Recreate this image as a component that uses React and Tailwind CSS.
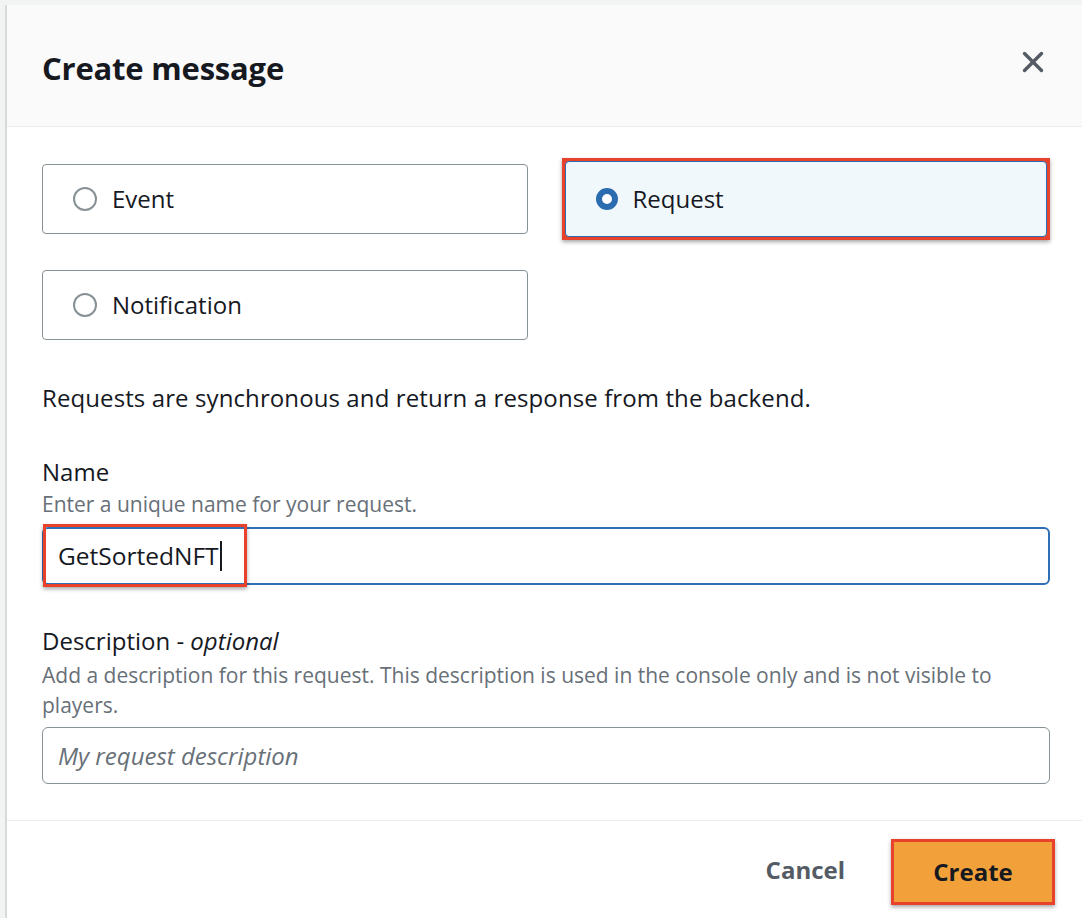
import { X } from 'lucide-react';

function Radio({ checked }) {
  return checked ? (
    <span className="w-[22px] h-[22px] rounded-full border-[6px] border-[#2b6cb0] bg-white shrink-0" />
  ) : (
    <span className="w-[24px] h-[24px] rounded-full border-2 border-[#879196] bg-white shrink-0" />
  );
}

function Tile({ label, checked }) {
  return (
    <div
      className={`flex items-center gap-[15px] h-full px-[30px] rounded-[4px] border ${
        checked ? 'bg-[#f1f8fc] border-[#2b6cb0]' : 'bg-white border-[#879196]'
      }`}
    >
      <Radio checked={checked} />
      <span className="text-[24px] text-[#16191f]">{label}</span>
    </div>
  );
}

export default function App() {
  return (
    <div className="w-[1082px] h-[918px] bg-[#f2f3f3] pt-[5px] pl-[5px] overflow-hidden font-['Open_Sans',sans-serif]">
      <div className="h-full bg-white border-l-2 border-[#d5dbdb] flex flex-col">
        <div className="h-[122px] bg-[#fafafa] border-b border-[#eaeded] flex items-center justify-between pl-[35px] pr-[32px] pt-[5px]">
          <h1 className="text-[31px] font-bold text-[#16191f] tracking-[-0.2px]">Create message</h1>
          <X className="w-[34px] h-[34px] text-[#545b64] -mt-[12px]" strokeWidth={2.4} />
        </div>

        <div className="flex-1 pl-[35px] pr-[32px] pt-[37px]">
          <div className="grid grid-cols-2 gap-x-[37px] gap-y-[36px] auto-rows-[70px]">
            <Tile label="Event" />
            <div className="p-[3px] -mt-[6px] -ml-[3px] h-[82px] bg-[#e8412c] shadow-[0_2px_4px_rgba(0,0,0,0.35)]">
              <Tile label="Request" checked />
            </div>
            <Tile label="Notification" />
          </div>

          <p className="mt-[40px] text-[24px] text-[#16191f] tracking-[0.1px]">
            Requests are synchronous and return a response from the backend.
          </p>

          <div className="mt-[40px]">
            <div className="text-[24px] text-[#16191f] leading-[32px]">Name</div>
            <div className="text-[21px] text-[#687078] leading-[32px]">Enter a unique name for your request.</div>
            <div className="relative mt-[7px] h-[58px] rounded-[6px] border-2 border-[#2f6fb5] flex items-center pl-[14px]">
              <div className="absolute left-[-1px] top-[-5px] w-[204px] h-[63px] border-[3px] border-[#e8412c] shadow-[0_2px_4px_rgba(0,0,0,0.35)]" />
              <span className="text-[24.5px] text-[#16191f]">GetSortedNFT</span>
              <span className="w-[2px] h-[30px] bg-[#16191f] ml-[1px]" />
            </div>
          </div>

          <div className="mt-[40px]">
            <div className="text-[24px] text-[#16191f] leading-[32px]">
              Description - <i>optional</i>
            </div>
            <div className="mt-[3px] text-[21px] text-[#687078] leading-[30px] pr-[20px]">
              Add a description for this request. This description is used in the console only and is not visible to players.
            </div>
            <div className="mt-[7px] h-[57px] rounded-[6px] border border-[#879196] flex items-center pl-[15px]">
              <span className="text-[24px] italic text-[#687078]">My request description</span>
            </div>
          </div>
        </div>

        <div className="h-[98px] border-t border-[#eaeded] flex items-center justify-end pr-[27px] gap-[46px]">
          <span className="text-[24px] font-bold text-[#545b64]">Cancel</span>
          <div className="bg-[#e8412c] p-[3px] shadow-[0_2px_4px_rgba(0,0,0,0.35)] mt-[4px]">
            <div className="w-[158px] h-[60px] bg-[#f2a03a] flex items-center justify-center">
              <span className="text-[24px] font-bold text-[#16191f]">Create</span>
            </div>
          </div>
        </div>
      </div>
    </div>
  );
}
